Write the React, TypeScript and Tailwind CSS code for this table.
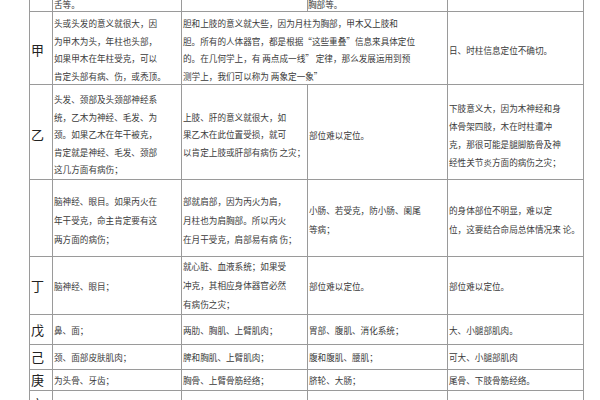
import React from 'react';

type Cell = { lines: string[]; w: string; lh?: string };

type Row = {
  h: string;
  gan: string;
  cells: Cell[];
  pt?: string;
};

const W1 = 'w-[23px]';
const W2 = 'w-[129px]';
const W3 = 'w-[126px]';
const W4 = 'w-[140px]';
const W5 = 'w-[136px]';

const rows: Row[] = [
  {
    h: 'h-[73px]',
    gan: '甲',
    pt: 'pt-[4px]',
    cells: [
      {
        w: W2,
        lh: 'leading-[17.5px]',
        lines: ['头或头发的意义就很大，因', '为甲木为头，年柱也头部，', '如果甲木在年柱受克，可以', '肯定头部有病、伤，或秃顶。'],
      },
      {
        w: 'w-[266px]',
        lh: 'leading-[17.5px]',
        lines: [
          '胆和上肢的意义就大些，因为月柱为胸部，甲木又上肢和',
          '胆。所有的人体器官，都是根据“这些重叠”信息来具体定位',
          '的。在几何学上，有 两点成一线” 定律，那么发展运用到预',
          '测学上，我们可以称为 两象定一象”',
        ],
      },
      { w: W5, lines: ['日、时柱信息定位不确切。'] },
    ],
  },
  {
    h: 'h-[95px]',
    gan: '乙',
    pt: 'pt-[6px]',
    cells: [
      {
        w: W2,
        lh: 'leading-[17.5px]',
        lines: ['头发、颈部及头颈部神经系', '统，乙木为神经、毛发、为', '颈。如果乙木在年干被克，', '肯定就是神经、毛发、颈部', '这几方面有病伤；'],
      },
      {
        w: W3,
        lh: 'leading-[17.5px]',
        lines: ['上肢、肝的意义就很大，如', '果乙木在此位置受损，就可', '以肯定上肢或肝部有病伤 之灾；'],
      },
      { w: W4, lines: ['部位难以定位。'] },
      {
        w: W5,
        lh: 'leading-[18px]',
        lines: ['下肢意义大，因为木神经和身', '体骨架四肢，木在时柱遭冲', '克，那很可能是腿脚筋骨及神', '经性关节炎方面的病伤之灾；'],
      },
    ],
  },
  {
    h: 'h-[77px]',
    gan: '',
    pt: 'pt-[4px]',
    cells: [
      { w: W2, lh: 'leading-[19px]', lines: ['脑神经、眼目。如果丙火在', '年干受克，命主肯定要有这', '两方面的病伤；'] },
      { w: W3, lh: 'leading-[19px]', lines: ['部就肩部，因为丙火为肩，', '月柱也为肩胸部。所以丙火', '在月干受克，肩部易有病 伤；'] },
      { w: W4, lh: 'leading-[19px]', lines: ['小肠、若受克，防小肠、阑尾', '等病；'] },
      { w: W5, lh: 'leading-[19px]', lines: ['的身体部位不明显，难以定', '位，这要结合命局总体情况来 论。'] },
    ],
  },
  {
    h: 'h-[58px]',
    gan: '丁',
    cells: [
      { w: W2, lines: ['脑神经、眼目；'] },
      { w: W3, lh: 'leading-[19px]', lines: ['就心脏、血液系统；如果受', '冲克，其相应身体器官必然', '有病伤之灾；'] },
      { w: W4, lines: ['部位难以定位。'] },
      { w: W5, lines: ['部位难以定位。'] },
    ],
  },
  {
    h: 'h-[30px]',
    gan: '戊',
    cells: [
      { w: W2, lines: ['鼻、面；'] },
      { w: W3, lines: ['两肋、胸肌、上臂肌肉；'] },
      { w: W4, lines: ['胃部、腹肌、消化系统；'] },
      { w: W5, lines: ['大、小腿部肌肉。'] },
    ],
  },
  {
    h: 'h-[25px]',
    gan: '己',
    cells: [
      { w: W2, lines: ['颈、面部皮肤肌肉；'] },
      { w: W3, lines: ['脾和胸肌、上臂肌肉；'] },
      { w: W4, lines: ['腹和腹肌、腰肌；'] },
      { w: W5, lines: ['可大、小腿部肌肉'] },
    ],
  },
  {
    h: 'h-[21px]',
    gan: '庚',
    cells: [
      { w: W2, lines: ['为头骨、牙齿；'] },
      { w: W3, lines: ['胸骨、上臂骨筋经络；'] },
      { w: W4, lines: ['脐轮、大肠；'] },
      { w: W5, lines: ['尾骨、下肢骨筋经络。'] },
    ],
  },
  {
    h: 'h-[26px]',
    gan: '辛',
    cells: [
      { w: W2, lines: [] },
      { w: W3, lines: [] },
      { w: W4, lines: [] },
      { w: W5, lines: [] },
    ],
  },
];

export default function App() {
  return (
    <div
      className="w-[600px] h-[400px] overflow-hidden bg-white text-[#3a3a3a]"
      style={{ fontFamily: '"Noto Sans CJK SC", "Noto Sans", sans-serif' }}
    >
      <div className="ml-[29px] -mt-[12px] w-[555px] border-l border-t border-[#9a9a9a]">
        {/* 上一行（被截断） */}
        <div className="flex h-[23px] border-b border-[#9a9a9a] text-[8.6px] leading-[10px]">
          <div className={`${W1} border-r border-[#9a9a9a]`} />
          <div className={`${W2} border-r border-[#9a9a9a] pl-[1px] pt-[10px]`}>舌等。</div>
          <div className={`${W3} border-r border-[#9a9a9a]`} />
          <div className={`${W4} border-r border-[#9a9a9a] pt-[10px]`}>胸部等。</div>
          <div className={`${W5} border-r border-[#9a9a9a]`} />
        </div>

        {rows.map((row, i) => (
          <div key={i} className={`flex ${row.h} border-b border-[#9a9a9a] text-[8.6px]`}>
            <div className={`${W1} shrink-0 border-r border-[#9a9a9a] flex items-center pl-[1px] text-[13px] text-[#222] ${row.pt ?? ''}`}>
              {row.gan}
            </div>
            {row.cells.map((c, j) => (
              <div
                key={j}
                className={`${c.w} shrink-0 border-r border-[#9a9a9a] flex flex-col justify-center pl-[1px] whitespace-nowrap ${c.lh ?? 'leading-[12px]'} ${row.pt ?? ''}`}
              >
                {c.lines.map((l, k) => (
                  <div key={k}>{l}</div>
                ))}
              </div>
            ))}
          </div>
        ))}
      </div>
    </div>
  );
}
